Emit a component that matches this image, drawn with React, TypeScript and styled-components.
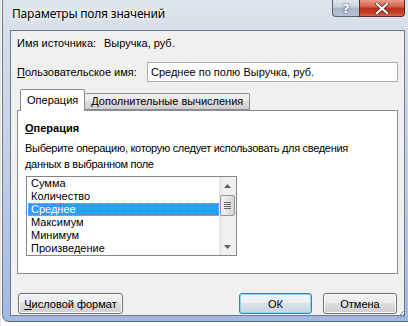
import React from "react";
import styled, { createGlobalStyle } from "styled-components";

const Global = createGlobalStyle`
  html, body { margin: 0; padding: 0; }
  body {
    width: 408px; height: 326px; overflow: hidden;
    background: #ffffff;
    font-family: "Liberation Sans", Arial, sans-serif;
  }
`;

const Page = styled.div`
  width: 408px;
  height: 326px;
  background: linear-gradient(90deg, #e4e4e4 0, #e4e4e4 1px, #ffffff 1px);
  overflow: hidden;
`;

const Frame = styled.div`
  margin-left: 2px;
  width: 406px;
  height: 322px;
  box-sizing: border-box;
  border-left: 1px solid #6e7884;
  border-bottom: 1px solid #5a6a86;
  border-radius: 0 0 0 7px;
  background:
    linear-gradient(180deg, #dfe5ec 0, #d6dee8 30px, #bccbe5 60%, #a2b8e1 100%);
  display: flex;
  flex-direction: column;
  position: relative;
`;

const TitleBar = styled.div`
  height: 30px;
  display: flex;
  align-items: flex-start;
  justify-content: space-between;
`;

const TitleText = styled.div`
  font-family: "Noto Sans", "Open Sans", sans-serif;
  font-size: 12px;
  letter-spacing: -0.2px;
  color: #000;
  margin: 5px 0 0 9px;
  text-shadow: 0 0 6px #fff, 0 0 4px #fff;
`;

const CaptionButtons = styled.div`
  display: flex;
  margin-right: 3px;
`;

const HelpButton = styled.div`
  width: 27px;
  height: 17px;
  box-sizing: border-box;
  border: 1px solid #5a6478;
  border-right: none;
  border-top: none;
  border-radius: 0 0 0 4px;
  background: linear-gradient(180deg, #dfe4ec 0, #c9d1dd 45%, #aab5c6 50%, #b7c2d3 100%);
  display: flex;
  align-items: center;
  justify-content: center;
  color: #fff;
  font-family: "DejaVu Sans", sans-serif;
  font-weight: bold;
  font-size: 13px;
  text-shadow: 0 0 1px #44506a, 0 0 2px #44506a;
`;

const CloseButton = styled.div`
  width: 46px;
  height: 17px;
  box-sizing: border-box;
  border: 1px solid #5d2a24;
  border-top: none;
  border-radius: 0 0 4px 0;
  background: linear-gradient(180deg, #e8a08e 0, #d45a44 45%, #b8301c 50%, #c63e25 80%, #dc6848 100%);
  display: flex;
  align-items: center;
  justify-content: center;
`;

const Client = styled.div`
  margin: 0 3px 0 7px;
  flex: 1;
  margin-bottom: 5px;
  background: #f0f0f0;
  border: 1px solid #6b7a93;
  box-sizing: border-box;
  display: flex;
  flex-direction: column;
  padding: 0 6px 0 6px;
  font-size: 11px;
  color: #000;
`;

const InfoRow = styled.div`
  height: 13px;
  margin-top: 6px;
  display: flex;
  align-items: center;
  line-height: 13px;
`;

const InfoLabel = styled.span`
  width: 87px;
`;

const NameRow = styled.div`
  margin-top: 12px;
  height: 20px;
  display: flex;
  align-items: center;
`;

const NameLabel = styled.span`
  width: 130px;
`;

const TextInput = styled.div`
  flex: 1;
  height: 20px;
  box-sizing: border-box;
  border: 1px solid #abadb3;
  border-top-color: #adadad;
  background: #fff;
  padding-left: 3px;
  display: flex;
  align-items: center;
`;

const Tabs = styled.div`
  margin-top: 7px;
  display: flex;
  align-items: flex-end;
  padding-left: 3px;
  height: 21px;
  position: relative;
  z-index: 1;
`;

const Tab = styled.div<{ $active?: boolean }>`
  box-sizing: border-box;
  height: ${(p) => (p.$active ? "22px" : "17px")};
  margin-bottom: ${(p) => (p.$active ? "-1px" : "0")};
  border: 1px solid #898c95;
  border-bottom: ${(p) => (p.$active ? "none" : "1px solid #898c95")};
  border-left: ${(p) => (p.$active ? "1px solid #898c95" : "none")};
  border-radius: 2px 2px 0 0;
  background: ${(p) =>
    p.$active ? "#ffffff" : "linear-gradient(180deg, #f2f2f2 0, #ebebeb 50%, #dddddd 50%, #cfcfcf 100%)"};
  padding: ${(p) => (p.$active ? "4px 6px 0 6px" : "1px 6px 0 6px")};
  line-height: 13px;
`;

const Panel = styled.div`
  height: 164px;
  box-sizing: border-box;
  border: 1px solid #898c95;
  background: #fff;
  padding: 11px 0 0 7px;
  display: flex;
  flex-direction: column;
`;

const Heading = styled.div`
  font-weight: bold;
  line-height: 13px;
  height: 13px;
`;

const Desc = styled.div`
  margin-top: 5px;
  line-height: 16px;
  letter-spacing: -0.3px;
`;

const ListBox = styled.div`
  margin-top: 4px;
  margin-left: 1px;
  width: 211px;
  height: 80px;
  box-sizing: border-box;
  border: 1px solid #828790;
  background: #fff;
  display: flex;
`;

const Items = styled.div`
  flex: 1;
  display: flex;
  flex-direction: column;
  padding-left: 1px;
`;

const Item = styled.div<{ $selected?: boolean }>`
  height: 13px;
  line-height: 13px;
  box-sizing: border-box;
  padding-left: 2px;
  color: ${(p) => (p.$selected ? "#fff" : "#000")};
  background: ${(p) => (p.$selected ? "#3399ff" : "transparent")};
  border: 1px dotted ${(p) => (p.$selected ? "#f5a040" : "transparent")};
  display: flex;
  align-items: center;
`;

const ScrollBar = styled.div`
  width: 17px;
  background: linear-gradient(90deg, #e3e3e3 0, #f0f0f0 30%, #f0f0f0 100%);
  display: flex;
  flex-direction: column;
  align-items: center;
`;

const Arrow = styled.div`
  height: 17px;
  width: 17px;
  display: flex;
  align-items: center;
  justify-content: center;
`;

const Thumb = styled.div`
  width: 15px;
  height: 21px;
  margin-top: 1px;
  box-sizing: border-box;
  border: 1px solid #959595;
  border-radius: 2px;
  background: linear-gradient(90deg, #f2f2f2 0, #e6e6e6 50%, #d6d6d6 100%);
  display: flex;
  align-items: center;
  justify-content: center;
`;

const Spacer = styled.div`
  flex: 1;
`;

const Buttons = styled.div`
  margin-top: 19px;
  display: flex;
  align-items: center;
  gap: 11px;
  height: 21px;
  padding-left: 1px;
  padding-right: 1px;
`;

const Button = styled.div<{ $w: number; $default?: boolean }>`
  width: ${(p) => p.$w}px;
  height: 21px;
  box-sizing: border-box;
  border: 1px solid ${(p) => (p.$default ? "#3c7fb1" : "#707070")};
  border-radius: 3px;
  background: ${(p) =>
    p.$default
      ? "linear-gradient(180deg, #f0f5f8 0, #e8eef2 50%, #d8e2e9 50%, #cbd7e0 100%)"
      : "linear-gradient(180deg, #f2f2f2 0, #ebebeb 50%, #dddddd 50%, #cfcfcf 100%)"};
  box-shadow: inset 0 0 0 1px ${(p) => (p.$default ? "#8fd3f3" : "#fcfcfc")};
  display: flex;
  align-items: center;
  justify-content: center;
`;

const U = styled.span`
  text-decoration: underline;
`;

const Grip = styled.svg`
  position: absolute;
  right: 2px;
  bottom: 2px;
`;

const items = ["Сумма", "Количество", "Среднее", "Максимум", "Минимум", "Произведение"];

export default function App() {
  return (
    <>
      <Global />
      <Page>
        <Frame>
          <TitleBar>
            <TitleText>Параметры поля значений</TitleText>
            <CaptionButtons>
              <HelpButton>?</HelpButton>
              <CloseButton>
                <svg width="14" height="11" viewBox="0 0 14 11">
                  <path d="M2 1 L12 10 M12 1 L2 10" stroke="#5a2018" strokeWidth="3.6" strokeLinecap="square" />
                  <path d="M2 1 L12 10 M12 1 L2 10" stroke="#ffffff" strokeWidth="2.2" strokeLinecap="square" />
                </svg>
              </CloseButton>
            </CaptionButtons>
          </TitleBar>
          <Client>
            <InfoRow>
              <InfoLabel>Имя источника:</InfoLabel>
              <span>Выручка, руб.</span>
            </InfoRow>
            <NameRow>
              <NameLabel>
                <U>П</U>ользовательское имя:
              </NameLabel>
              <TextInput>Среднее по полю Выручка, руб.</TextInput>
            </NameRow>
            <Tabs>
              <Tab $active>Операция</Tab>
              <Tab>Дополнительные вычисления</Tab>
            </Tabs>
            <Panel>
              <Heading>
                <U>О</U>перация
              </Heading>
              <Desc>
                Выберите операцию, которую следует использовать для сведения
                <br />
                данных в выбранном поле
              </Desc>
              <ListBox>
                <Items>
                  {items.map((it) => (
                    <Item key={it} $selected={it === "Среднее"}>
                      {it}
                    </Item>
                  ))}
                </Items>
                <ScrollBar>
                  <Arrow>
                    <svg width="7" height="4" viewBox="0 0 7 4">
                      <path d="M0 4 L3.5 0 L7 4 Z" fill="#606060" />
                    </svg>
                  </Arrow>
                  <Thumb>
                    <svg width="7" height="7" viewBox="0 0 7 7">
                      <path d="M0 0.5 H7 M0 2.5 H7 M0 4.5 H7 M0 6.5 H7" stroke="#6a6a6a" strokeWidth="1" />
                    </svg>
                  </Thumb>
                  <Spacer />
                  <Arrow>
                    <svg width="7" height="4" viewBox="0 0 7 4">
                      <path d="M0 0 L7 0 L3.5 4 Z" fill="#606060" />
                    </svg>
                  </Arrow>
                </ScrollBar>
              </ListBox>
            </Panel>
            <Buttons>
              <Button $w={105}>
                <span>
                  <U>Ч</U>исловой формат
                </span>
              </Button>
              <Spacer />
              <Button $w={73} $default>
                ОК
              </Button>
              <Button $w={74}>Отмена</Button>
            </Buttons>
          </Client>
          <Grip width="10" height="10" viewBox="0 0 10 10">
            <path d="M9 1 L1 9 M9 4 L4 9 M9 7 L7 9" stroke="#7f8ea8" strokeWidth="1" />
          </Grip>
        </Frame>
      </Page>
    </>
  );
}
